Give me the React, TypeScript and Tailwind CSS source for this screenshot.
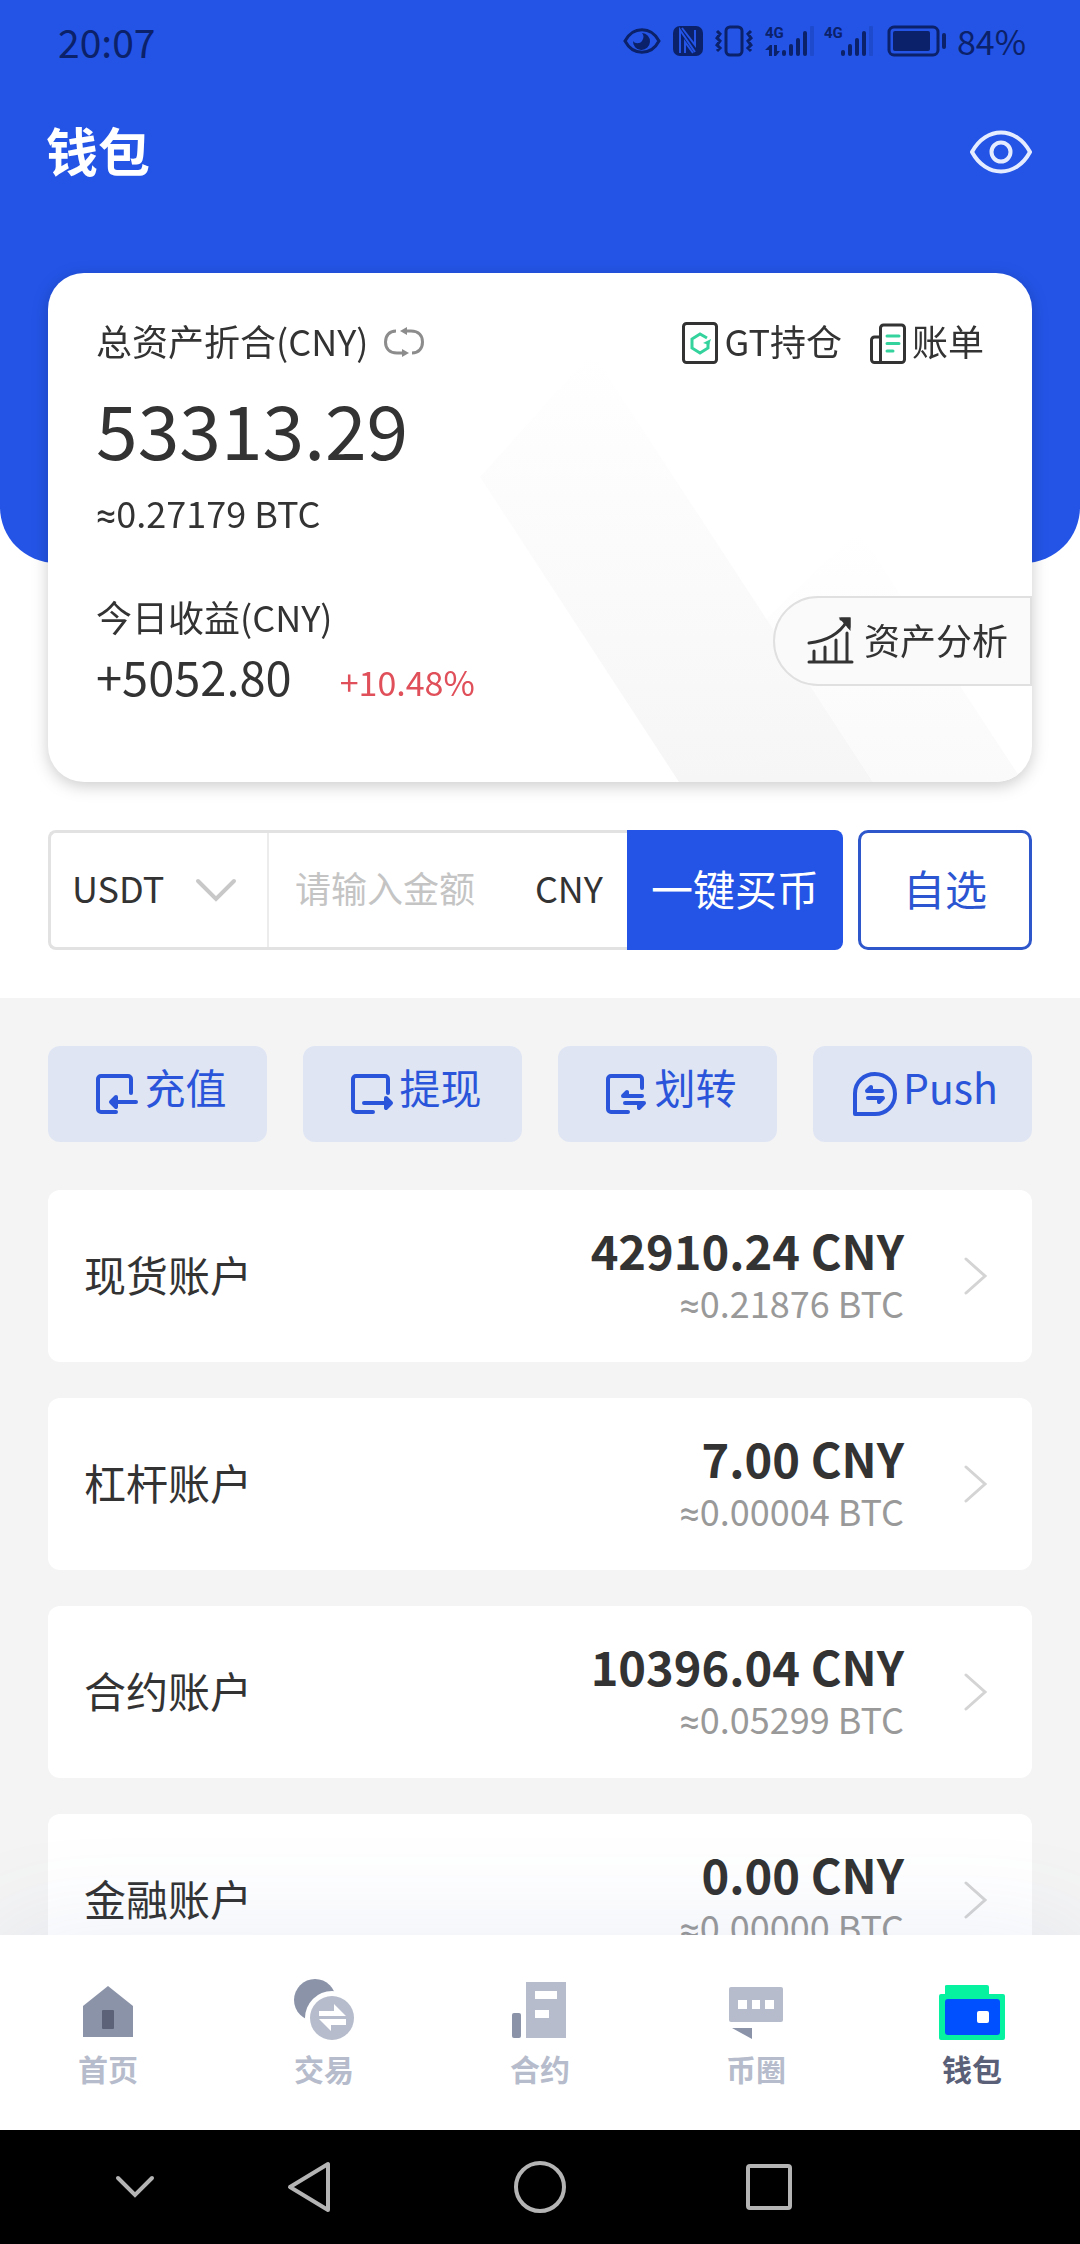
import { FC, ReactNode, useState } from 'react'

type Account = {
    name: string
    cny: string
    btc: string
}

const accounts: Account[] = [
    { name: '现货账户', cny: '42910.24', btc: '0.21876' },
    { name: '杠杆账户', cny: '7.00', btc: '0.00004' },
    { name: '合约账户', cny: '10396.04', btc: '0.05299' },
    { name: '金融账户', cny: '0.00', btc: '0.00000' },
]

const Btc: FC<{ value: string; className?: string }> = ({
    value,
    className,
}) => (
    <div className={className}>
        <span className="font-['Roboto',sans-serif]">≈</span>
        {value} BTC
    </div>
)

/* status bar */

const Signal: FC<{ data?: boolean }> = ({ data }) => (
    <svg width="51" height="32" viewBox="0 0 51 32" fill="currentColor">
        <text
            x="0"
            y="13"
            fontSize="15"
            fontWeight="700"
            fontFamily="Roboto, sans-serif"
        >
            4G
        </text>
        {data && (
            <path d="M0 25l5-5h2v11H4v-6zM9 20h3v6h3l-4 5H9z" />
        )}
        <rect x="17" y="25" width="4" height="6" rx="2" />
        <rect x="24" y="19" width="4" height="12" rx="2" />
        <rect x="31" y="13" width="4" height="18" rx="2" />
        <rect x="38" y="6" width="4" height="25" rx="2" />
        <rect x="45" y="1" width="4" height="30" rx="1" opacity="0.2" />
    </svg>
)

const StatusBar: FC = () => (
    <div className="flex h-[82px] items-center justify-between pr-[54px] pl-[58px] text-[#0b2169]">
        <span className="text-[39px] leading-[48px]">20:07</span>
        <div className="flex items-center">
            <svg
                className="mr-3"
                width="38"
                height="28"
                viewBox="0 0 38 28"
                fill="none"
            >
                <path
                    d="M2 14C10-1 28-1 36 14 28 29 10 29 2 14z"
                    stroke="currentColor"
                    strokeWidth="3"
                />
                <path
                    d="M19 6a8.500 8.500 0 1 1-9 8c2 3 7 3 9 0s2-6 0-8z"
                    fill="currentColor"
                />
            </svg>
            <svg
                className="mr-3"
                width="30"
                height="32"
                viewBox="0 0 30 32"
                fill="none"
            >
                <rect
                    y="1"
                    width="30"
                    height="30"
                    rx="7"
                    fill="currentColor"
                />
                <path
                    d="M7 28V5l15 22M22 5v15L9 3M12 28V17l8 11"
                    stroke="#2354e6"
                    strokeWidth="2"
                />
            </svg>
            <svg
                className="mr-3"
                width="38"
                height="32"
                viewBox="0 0 38 32"
                fill="none"
                stroke="currentColor"
                strokeWidth="3"
            >
                <rect x="11" y="2" width="16" height="28" rx="4" />
                <path d="M2 6l3 3-3 4 3 3-3 4 3 3-3 3M36 6l-3 3 3 4-3 3 3 4-3 3 3 3" />
            </svg>
            <div className="mr-2">
                <Signal data />
            </div>
            <div className="mr-3">
                <Signal />
            </div>
            <svg
                className="mr-2.5"
                width="60"
                height="32"
                viewBox="0 0 60 32"
                fill="none"
            >
                <rect
                    x="2"
                    y="2"
                    width="49"
                    height="28"
                    rx="5"
                    stroke="currentColor"
                    strokeWidth="3"
                />
                <rect
                    x="6"
                    y="6"
                    width="37"
                    height="20"
                    rx="2"
                    fill="currentColor"
                />
                <rect
                    x="55"
                    y="8"
                    width="4"
                    height="16"
                    rx="2"
                    fill="currentColor"
                />
            </svg>
            <span className="text-[34px] leading-[48px]">84%</span>
        </div>
    </div>
)

/* asset card */

const CardStripes: FC = () => (
    <svg
        className="absolute right-0 bottom-0"
        width="584"
        height="440"
        viewBox="0 0 584 440"
    >
        <defs>
            <linearGradient id="stripe" x1="0" y1="0" x2="0" y2="1">
                <stop offset="0" stopColor="#f6f6f6" stopOpacity="0" />
                <stop offset="1" stopColor="#f6f6f6" />
            </linearGradient>
            <linearGradient id="stripeLight" x1="0" y1="0" x2="0" y2="1">
                <stop offset="0" stopColor="#fafafa" stopOpacity="0" />
                <stop offset="1" stopColor="#fafafa" />
            </linearGradient>
        </defs>
        <path d="M32 135L144 10l281 430H231z" fill="url(#stripe)" />
        <path d="M318 277l92-89 165 252H425z" fill="url(#stripeLight)" />
    </svg>
)

const AssetCard: FC = () => (
    <section className="relative mx-12 -mt-[290px] overflow-hidden rounded-[36px] bg-white pt-[41px] pb-[72px] pl-12">
        <CardStripes />
        <div className="relative">
            <div className="flex items-center justify-between pr-12 text-[36px] leading-[52px]">
                <div className="flex items-center gap-4">
                    <span>总资产折合(CNY)</span>
                    <button aria-label="切换币种" className="pt-1">
                        <svg
                            width="40"
                            height="30"
                            viewBox="0 0 40 30"
                            fill="none"
                            stroke="#8c8c8c"
                            strokeWidth="3"
                        >
                            <path d="M12 4C5 4 1.500 9 1.500 15S5 26 13 26h6M28 26c7 0 10.500-5 10.500-11S35 4 27 4h-6" />
                            <path
                                d="M16 4l7-4v8zM25 26l-7-4v8z"
                                fill="#8c8c8c"
                                stroke="none"
                            />
                        </svg>
                    </button>
                </div>
                <div className="flex items-center gap-7">
                    <button className="flex items-center gap-1.5">
                        <svg
                            className="mt-1.5"
                            width="36"
                            height="44"
                            viewBox="0 0 36 44"
                            fill="none"
                        >
                            <rect
                                x="1.500"
                                y="2.500"
                                width="33"
                                height="39"
                                rx="3"
                                stroke="#333"
                                strokeWidth="3"
                            />
                            <path
                                d="M25 17l-7-4-8 5v9l8 5 8-5v-5"
                                stroke="#34d39e"
                                strokeWidth="3"
                            />
                            <path d="M21 22l8-4-2 6z" fill="#34d39e" />
                        </svg>
                        GT持仓
                    </button>
                    <button className="flex items-center gap-1.5">
                        <svg
                            className="mt-1.5"
                            width="36"
                            height="44"
                            viewBox="0 0 36 44"
                            fill="none"
                            strokeWidth="3"
                            strokeLinecap="round"
                        >
                            <path
                                d="M10.500 41.500V7a3 3 0 0 1 3-3h18a3 3 0 0 1 3 3v31.500a3 3 0 0 1-3 3h-27a3 3 0 0 1-3-3V19a3 3 0 0 1 3-3h6"
                                stroke="#333"
                            />
                            <path
                                d="M17 15h12M17 22.500h12M17 30h6"
                                stroke="#34d39e"
                            />
                        </svg>
                        账单
                    </button>
                </div>
            </div>
            <div className="mt-[18px] text-[75px] leading-[88px]">
                53313.29
            </div>
            <Btc
                value="0.27179"
                className="mt-3.5 text-[36px] leading-[52px]"
            />
            <div className="mt-12 flex items-start justify-between">
                <div>
                    <div className="text-[36px] leading-[52px]">
                        今日收益(CNY)
                    </div>
                    <div className="flex items-baseline gap-12">
                        <span className="text-[47px] leading-[68px]">
                            +5052.80
                        </span>
                        <span className="text-[34px] text-[#e0505a]">
                            +10.48%
                        </span>
                    </div>
                </div>
                <button className="mt-1.5 flex h-[90px] items-center gap-2.5 rounded-l-full border-2 border-[#e0e0e0] bg-[#fafafa] pr-[22px] pl-8 text-[36px]">
                    <svg
                        width="47"
                        height="48"
                        viewBox="0 0 47 48"
                        fill="none"
                        stroke="#333"
                        strokeWidth="3"
                        strokeLinecap="round"
                    >
                        <path d="M2 45h43M7 45V34M18 45V30M29 45V23M40 45V16" />
                        <path d="M2 26C20 24 33 16 40 4M34 2h8v8" />
                        <path d="M35 2h7v8z" fill="#333" />
                    </svg>
                    <span className="pb-1">资产分析</span>
                </button>
            </div>
        </div>
    </section>
)

const QuickBuy: FC = () => {
    const [coin, setCoin] = useState('USDT')
    const [amount, setAmount] = useState('')

    return (
        <form
            className="flex px-12 py-12 text-[36px]"
            onSubmit={(e) => e.preventDefault()}
        >
            <div className="flex h-[120px] flex-1 rounded-l-lg border-[3px] border-r-0 border-[#e2e2e2]">
                <div className="relative w-[218px] border-r-2 border-[#ececec]">
                    <select
                        aria-label="币种"
                        value={coin}
                        onChange={(e) => setCoin(e.target.value)}
                        className="h-full w-full appearance-none bg-transparent pb-1.5 pl-[21px] outline-none"
                    >
                        <option>USDT</option>
                        <option>BTC</option>
                    </select>
                    <svg
                        className="pointer-events-none absolute top-1/2 right-[30px] -translate-y-1/2"
                        width="42"
                        height="24"
                        viewBox="0 0 42 24"
                        fill="none"
                        stroke="#c8c8c8"
                        strokeWidth="4"
                        strokeLinecap="round"
                    >
                        <path d="M3 3l18 18L39 3" />
                    </svg>
                </div>
                <label className="flex min-w-0 flex-1 items-center pr-6 pb-1.5 pl-[26px]">
                    <input
                        value={amount}
                        onChange={(e) => setAmount(e.target.value)}
                        placeholder="请输入金额"
                        className="h-full w-full min-w-0 flex-1 outline-none placeholder:text-[#c4c4c4]"
                    />
                    <span>CNY</span>
                </label>
            </div>
            <button className="w-[216px] rounded-r-lg bg-[#2354e6] pb-1.5 text-[42px] text-white">
                一键买币
            </button>
            <button
                type="button"
                className="ml-[15px] w-[174px] rounded-[10px] border-[3px] border-[#2f57cc] pb-1.5 text-[42px] text-[#2c55d2]"
            >
                自选
            </button>
        </form>
    )
}

/* deposit, withdraw, transfer, push */

const ActionIcon: FC<{ children: ReactNode }> = ({ children }) => (
    <svg
        width="44"
        height="46"
        viewBox="0 0 44 46"
        fill="none"
        stroke="#2a55da"
        strokeWidth="4"
        strokeLinecap="round"
        strokeLinejoin="round"
    >
        {children}
    </svg>
)

const actions = [
    {
        label: '充值',
        icon: (
            <ActionIcon>
                <path d="M36 22V8a3 3 0 0 0-3-3H6a3 3 0 0 0-3 3v30a3 3 0 0 0 3 3h15" />
                <path d="M41 31H17M21 26l-5 5 5 5z" fill="#2a55da" />
            </ActionIcon>
        ),
    },
    {
        label: '提现',
        icon: (
            <ActionIcon>
                <path d="M38 22V8a3 3 0 0 0-3-3H6a3 3 0 0 0-3 3v30a3 3 0 0 0 3 3h17" />
                <path d="M14 32h26M36 27l5 5-5 5z" fill="#2a55da" />
            </ActionIcon>
        ),
    },
    {
        label: '划转',
        icon: (
            <ActionIcon>
                <path d="M37 17V8a3 3 0 0 0-3-3H6a3 3 0 0 0-3 3v30a3 3 0 0 0 3 3h17" />
                <path
                    d="M37 25H18l4-4v4M20 32h19l-5 5v-4"
                    fill="#2a55da"
                />
            </ActionIcon>
        ),
    },
    {
        label: 'Push',
        icon: (
            <ActionIcon>
                <path d="M2 43V22.500C2 11 11 3 22 3s20 8 20 20-9 20-20 20z" />
                <path
                    d="M29 20H14l4-4v4M15 27h15l-4 4v-4"
                    fill="#2a55da"
                />
            </ActionIcon>
        ),
    },
]

const Actions: FC = () => (
    <div className="grid grid-cols-4 gap-9">
        {actions.map(({ label, icon }) => (
            <button
                key={label}
                className="flex h-24 items-center justify-center gap-1.5 rounded-xl bg-[#dfe5f3] pl-1.5 text-[41px] text-[#2a55da]"
            >
                {icon}
                <span className="pb-4 leading-[48px]">{label}</span>
            </button>
        ))}
    </div>
)

const AccountCard: FC<{ account: Account }> = ({ account }) => (
    <a
        href="#"
        className="flex h-[172px] shrink-0 items-center rounded-xl bg-white pr-11 pl-9"
    >
        <span className="flex-1 pb-1.5 text-[42px]">{account.name}</span>
        <div className="text-right">
            <div className="text-[47px] leading-[56px] font-bold">
                {account.cny} CNY
            </div>
            <Btc
                value={account.btc}
                className="text-[36px] leading-[48px] text-[#999]"
            />
        </div>
        <svg
            className="ml-[60px]"
            width="24"
            height="40"
            viewBox="0 0 24 40"
            fill="none"
            stroke="#d4d4d4"
            strokeWidth="3"
            strokeLinecap="round"
        >
            <path d="M2 3l19 17L2 37" />
        </svg>
    </a>
)

/* bottom tabs */

const tabs = [
    {
        label: '首页',
        icon: (
            <>
                <path
                    d="M36 10l25 20v31H11V30z"
                    fill="#8b93a9"
                />
                <rect
                    x="30"
                    y="34"
                    width="12"
                    height="19"
                    rx="1"
                    fill="#5c6278"
                />
            </>
        ),
    },
    {
        label: '交易',
        icon: (
            <>
                <circle cx="27" cy="24" r="21" fill="#8b93a9" />
                <circle cx="44" cy="42" r="27" fill="#fff" />
                <circle cx="44" cy="42" r="22" fill="#b6bccb" />
                <path
                    d="M31 35h15v-7l12 12H31zM58 43H31l12 12v-6h15z"
                    fill="#fff"
                />
            </>
        ),
    },
    {
        label: '合约',
        icon: (
            <>
                <rect
                    x="8"
                    y="37"
                    width="9"
                    height="25"
                    rx="2"
                    fill="#8b93a9"
                />
                <path
                    d="M22 6h40v56H22zM31 15v8h22v-8zM31 34v8h14v-8z"
                    fill="#b6bccb"
                    fillRule="evenodd"
                />
            </>
        ),
    },
    {
        label: '币圈',
        icon: (
            <>
                <rect
                    x="9"
                    y="11"
                    width="54"
                    height="35"
                    rx="2"
                    fill="#b6bccb"
                />
                <path
                    d="M18 24h9v9h-9zM32 24h8v9h-8zM45 24h9v9h-9z"
                    fill="#fff"
                />
                <path d="M12 52h20v11z" fill="#8b93a9" />
            </>
        ),
    },
    {
        label: '钱包',
        icon: (
            <>
                <path
                    d="M9 10q0-1 2-1h40q2 0 2 2v7h14q2 0 2 2v42q0 2-2 2H5q-2 0-2-2V20q0-2 2-2h4z"
                    fill="#06f2a0"
                />
                <rect
                    x="9"
                    y="23"
                    width="55"
                    height="36"
                    rx="3"
                    fill="#0050ff"
                />
                <rect
                    x="41"
                    y="35"
                    width="12"
                    height="12"
                    rx="2"
                    fill="#fff"
                />
            </>
        ),
    },
]

const TabBar: FC<{ active: string }> = ({ active }) => (
    <nav className="relative grid h-[195px] shrink-0 grid-cols-5 bg-white pt-[41px] shadow-[0_0_110px_rgba(90,115,180,0.12)]">
        {tabs.map(({ label, icon }) => (
            <a
                key={label}
                href="#"
                className="flex flex-col items-center gap-1.5"
            >
                <svg width="72" height="66" viewBox="0 0 72 66">
                    {icon}
                </svg>
                <span
                    className={`text-[30px] leading-[40px] font-bold ${
                        label === active ? 'text-[#5a6078]' : 'text-[#b6bccb]'
                    }`}
                >
                    {label}
                </span>
            </a>
        ))}
    </nav>
)

const SystemBar: FC = () => (
    <div className="relative flex h-[114px] shrink-0 bg-black pl-12">
        <button
            aria-label="收起"
            className="flex w-[174px] items-center justify-center"
        >
            <svg
                width="40"
                height="24"
                viewBox="0 0 40 24"
                fill="none"
                stroke="#b4b4b4"
                strokeWidth="4"
                strokeLinecap="round"
            >
                <path d="M3 3l17 17L37 3" />
            </svg>
        </button>
        <button
            aria-label="返回"
            className="flex w-[174px] items-center justify-center"
        >
            <svg
                width="44"
                height="52"
                viewBox="0 0 44 52"
                fill="none"
                stroke="#b4b4b4"
                strokeWidth="4"
                strokeLinejoin="round"
            >
                <path d="M41 3v46L3 26z" />
            </svg>
        </button>
        <button
            aria-label="主屏幕"
            className="flex w-[288px] items-center justify-center"
        >
            <span className="size-[52px] rounded-full border-4 border-[#b4b4b4]" />
        </button>
        <button
            aria-label="最近任务"
            className="flex w-[170px] items-center justify-center"
        >
            <span className="size-[46px] rounded-sm border-4 border-[#b4b4b4]" />
        </button>
    </div>
)

export default function App() {
    return (
        <div className="flex h-screen flex-col bg-white font-['Noto_Sans_CJK_SC',sans-serif] text-[#333]">
            <main className="flex min-h-0 flex-1 flex-col overflow-hidden">
                <header className="rounded-b-[56px] bg-[#2354e6] pb-[341px]">
                    <StatusBar />
                    <div className="flex h-[140px] items-center justify-between pr-12 pl-[46px] text-white">
                        <h1 className="pb-1 text-[52px] leading-[72px] font-bold">
                            钱包
                        </h1>
                        <button aria-label="隐藏金额">
                            <svg
                                width="62"
                                height="44"
                                viewBox="0 0 62 44"
                                fill="none"
                                stroke="#e6ecff"
                                strokeWidth="4"
                            >
                                <path d="M2 22C16-4 46-4 60 22 46 48 16 48 2 22z" />
                                <circle cx="31" cy="22" r="9.500" />
                            </svg>
                        </button>
                    </div>
                </header>
                <div className="drop-shadow-[0_4px_8px_rgba(0,0,0,0.2)]">
                    <AssetCard />
                </div>
                <QuickBuy />
                <div className="flex flex-1 flex-col gap-9 bg-[#f4f4f4] px-12 pt-12">
                    <div className="pb-3">
                        <Actions />
                    </div>
                    {accounts.map((account) => (
                        <AccountCard key={account.name} account={account} />
                    ))}
                </div>
            </main>
            <TabBar active="钱包" />
            <SystemBar />
        </div>
    )
}
